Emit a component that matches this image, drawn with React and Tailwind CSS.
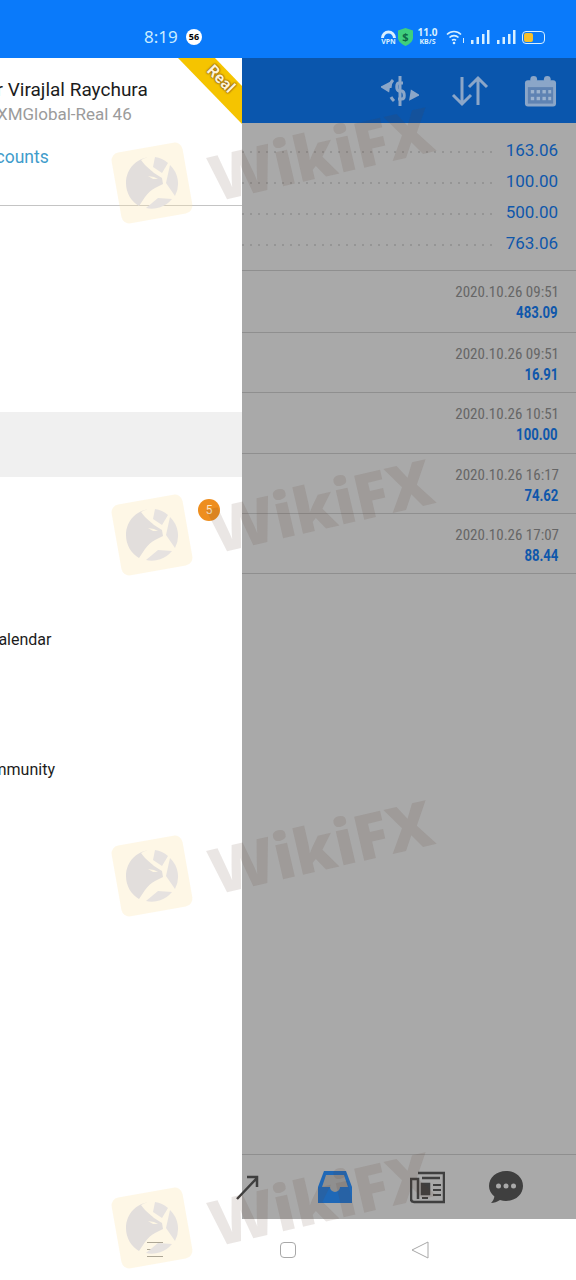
import React from 'react';

const balances = ['163.06', '100.00', '500.00', '763.06'];

const deals = [
  { time: '2020.10.26 09:51', amount: '483.09', h: 'h-[62px]' },
  { time: '2020.10.26 09:51', amount: '16.91', h: 'h-[60px]' },
  { time: '2020.10.26 10:51', amount: '100.00', h: 'h-[61px]' },
  { time: '2020.10.26 16:17', amount: '74.62', h: 'h-[60px]' },
  { time: '2020.10.26 17:07', amount: '88.44', h: 'h-[60px]' },
];

const menu = [
  { id: 1 },
  { id: 2 },
  { id: 3 },
  { id: 4, active: true },
  { id: 5, badge: '5' },
  { id: 6 },
  { id: 7, label: 'Calendar', shift: '-ml-[12px]' },
  { id: 8 },
  { id: 9, label: 'Community', shift: '-ml-[27px]' },
];

const Watermark = ({ className }) => (
  <div className={`absolute left-[112px] w-[330px] h-[120px] pointer-events-none ${className}`}>
    <div className="absolute left-[4px] top-[12px] w-[72px] h-[72px] rounded-[8px] bg-[#fbe6ad]/30 rotate-[-10deg] flex items-center justify-center">
      <svg width="54" height="54" viewBox="0 0 54 54" className="rotate-[10deg]">
        <path d="M27 1C12 1 1 13 1 27c0 10 5 18 13 23l6-9c3-4 6-7 10-9l8-4-1-6-8-5C25 13 20 10 16 4c3-2 7-3 11-3z" fill="#e2dedc" />
        <path d="M23 20l6 1 4 2-5 0z" fill="#fdf6e3" />
        <path d="M30 1a26 26 0 0 1 13 6L37 17 28 11z" fill="#e6e2e0" />
        <path d="M45 9a26 26 0 0 1 5 31L41 27z" fill="#e6e2e0" />
        <path d="M47 43a26 26 0 0 1-26 9l12-10z" fill="#e6e2e0" />
      </svg>
    </div>
    <span className="absolute left-[95px] top-[-22px] rotate-[-13deg] font-['Open_Sans',sans-serif] font-extrabold text-[63px] leading-[80px] text-[#5c3a30]/[0.13] whitespace-nowrap">
      WikiFX
    </span>
  </div>
);

const SignalIcon = () => (
  <svg width="19" height="16" viewBox="0 0 19 16" fill="#d8f0ff">
    <rect x="0" y="11" width="2.5" height="4" />
    <rect x="5.5" y="8" width="2.5" height="7" />
    <rect x="11" y="5" width="2.5" height="10" />
    <rect x="16" y="1" width="2.5" height="14" />
  </svg>
);

const StatusBar = () => (
  <div className="h-[58px] bg-[#0a7afa] flex items-center pt-[16px] shrink-0">
    <span className="ml-[144px] w-[33px] text-[17px] text-[#c9ecff]">8:19</span>
    <span className="ml-[9px] w-[16px] h-[16px] rounded-full bg-white text-black text-[9px] font-bold flex items-center justify-center">
      56
    </span>
    <div className="ml-[178px] flex items-center">
      <div className="w-[17px] flex flex-col items-center text-[#d8f0ff] leading-none">
        <svg width="15" height="8" viewBox="0 0 15 8" fill="#d8f0ff">
          <path d="M0 8a7.5 7.5 0 0 1 15 0h-3a4.5 4.5 0 0 0-9 0z" />
        </svg>
        <span className="text-[7px] font-bold">VPN</span>
      </div>
      <svg className="ml-[1px]" width="15" height="18" viewBox="0 0 15 18">
        <path d="M7.5 0L15 2.5v7c0 4-3.5 6.8-7.5 8.5C3.500 16.300 0 13.500 0 9.500v-7z" fill="#3fcf7d" />
        <text x="7.500" y="13" textAnchor="middle" fontSize="11" fontWeight="700" fill="#0f6a48">$</text>
      </svg>
      <div className="ml-[4px] w-[21px] flex flex-col items-center text-[#d8f0ff] font-bold leading-[9px]">
        <span className="text-[10px]">11.0</span>
        <span className="text-[7px]">KB/S</span>
      </div>
      <svg className="ml-[8px]" width="19" height="15" viewBox="0 0 19 15" fill="none" stroke="#d8f0ff" strokeWidth="1.6">
        <path d="M1 4.500c4-4 10-4 14 0" />
        <path d="M3.500 7.500c2.500-2.500 6.500-2.500 9 0" />
        <path d="M6 10.300c1.200-1 2.800-1 4 0" />
        <circle cx="8" cy="13" r="1.300" fill="#d8f0ff" stroke="none" />
        <path d="M17.500 8v5" strokeWidth="1" />
      </svg>
      <div className="ml-[6px]"><SignalIcon /></div>
      <div className="ml-[7px]"><SignalIcon /></div>
      <div className="ml-[6px] w-[23px] h-[13px] rounded-[4px] border border-[#d8f0ff] p-[1px]">
        <div className="w-[9px] h-full rounded-[2px] bg-[#f6c02c]" />
      </div>
    </div>
  </div>
);

const Drawer = () => (
  <div className="w-[242px] shrink-0 bg-white relative overflow-hidden font-['Roboto',sans-serif]">
    <div className="h-[148px] border-b border-[#c4c4c4] relative">
      <div className="-ml-[20px] pt-[21px] text-[19px] leading-[22px] text-[#1c1c1c] whitespace-nowrap">Mr Virajlal Raychura</div>
      <div className="-ml-[3px] pt-[2px] text-[17px] leading-[22px] text-[#9b9b9b] whitespace-nowrap">XMGlobal-Real 46</div>
      <div className="-ml-[25px] pt-[21px] text-[17.500px] leading-[22px] text-[#3f9ccb] whitespace-nowrap">Accounts</div>
      <svg className="absolute right-0 top-0" width="64" height="66" viewBox="0 0 64 66">
        <polygon points="0,0 37,0 64,28 64,66" fill="#f5c400" />
      </svg>
      <span className="absolute right-[5px] top-[13px] rotate-45 text-[16px] leading-none font-bold text-[#fff3d6] [text-shadow:0_0_2px_#7a4a10,0_0_2px_#7a4a10]">Real</span>
    </div>
    <div className="pt-[11px]">
      {menu.map((item) => (
        <div key={item.id} className={`h-[65px] relative flex items-center text-[16px] text-[#1c1c1c] ${item.active ? 'bg-[#f0f0f0]' : ''}`}>
          {item.label && <span className={`${item.shift} mt-[1px]`}>{item.label}</span>}
          {item.badge && (
            <span className="absolute left-[198px] top-[22px] w-[22px] h-[22px] rounded-full bg-[#ee8e1e] text-[#ffe7c4] text-[12px] flex items-center justify-center">
              {item.badge}
            </span>
          )}
        </div>
      ))}
    </div>
  </div>
);

const MainPanel = () => (
  <div className="flex-1 bg-[#a9a9a9] flex flex-col font-['Roboto',sans-serif]">
    <div className="h-[65px] bg-[#0a56ad] flex items-center shrink-0 relative">
      <svg className="ml-[139px]" width="38" height="34" viewBox="0 0 38 34" fill="none" stroke="#8ba6c8" strokeWidth="3">
        <path d="M19 2v30" />
        <path d="M22 9h-4c-3 0-3 7 0 8h3c3 1 3 8 0 8h-4" />
        <path d="M12 6c-2 2-3 5-3 8M10 23c1 2 2 3 3 4" />
        <path d="M2 13l6-3-1 6z" fill="#8ba6c8" />
        <path d="M36 21l-6 3 1-6z" fill="#8ba6c8" />
      </svg>
      <svg className="ml-[32px]" width="38" height="32" viewBox="0 0 38 32" fill="none" stroke="#8ba6c8" strokeWidth="3">
        <path d="M11 2v27M2 20l9 9 9-9" />
        <path d="M27 30V3M18 12l9-9 9 9" />
      </svg>
      <svg className="ml-[35px]" width="33" height="34" viewBox="0 0 34 34">
        <rect x="1" y="6" width="32" height="27" rx="3" fill="#8ba6c8" />
        <rect x="4" y="13" width="26" height="17" fill="#5f83b3" />
        <circle cx="10" cy="5" r="3.500" fill="#8ba6c8" />
        <circle cx="24" cy="5" r="3.500" fill="#8ba6c8" />
        <g fill="#9cb3cf">
          <rect x="7" y="16" width="3.500" height="3.500" />
          <rect x="13" y="16" width="3.500" height="3.500" />
          <rect x="19" y="16" width="3.500" height="3.500" />
          <rect x="25" y="16" width="3" height="3.500" />
          <rect x="7" y="23" width="3.500" height="3.500" />
          <rect x="13" y="23" width="3.500" height="3.500" />
          <rect x="19" y="23" width="3.500" height="3.500" />
          <rect x="25" y="23" width="3" height="3.500" />
        </g>
      </svg>
    </div>
    <div className="h-[148px] border-b border-[#8f8f8f] pt-[12px] pr-[18px] shrink-0">
      {balances.map((value) => (
        <div key={value} className="h-[31px] flex items-center justify-between">
          <div className="w-[250px] h-[2px] mt-[3px] bg-[linear-gradient(90deg,#959595_2px,transparent_2px)] bg-[length:8px_2px]" />
          <span className="text-[17px] text-[#0f57ab]">{value}</span>
        </div>
      ))}
    </div>
    {deals.map((deal) => (
      <div key={deal.time + deal.amount} className={`${deal.h} border-b border-[#8f8f8f] pr-[17px] pt-[12px] flex flex-col items-end shrink-0`}>
        <span className="text-[15px] leading-[18px] text-[#666666] [font-stretch:87%] whitespace-nowrap">{deal.time}</span>
        <span className="mt-[1px] mr-[1px] text-[16px] leading-[21px] font-bold text-[#0f57ab] scale-x-[0.82] origin-right">{deal.amount}</span>
      </div>
    ))}
    <div className="flex-1" />
    <div className="h-[65px] border-t border-[#8f8f8f] flex items-center shrink-0 relative">
      <svg className="-ml-[6px]" width="24" height="26" viewBox="0 0 24 26" fill="none" stroke="#3f3f3f" strokeWidth="2.500">
        <path d="M1 25L21 4M11 3h10v10" />
      </svg>
      <svg className="ml-[58px]" width="34" height="32" viewBox="0 0 34 32">
        <path d="M6 0h22l6 16v16H0V16z" fill="#1f68b7" />
        <path d="M8 4h18l4 12h-8a5 5 0 0 1-10 0H4z" fill="#8f8f8f" />
      </svg>
      <svg className="ml-[58px]" width="35" height="34" viewBox="0 0 35 34" fill="none" stroke="#3f3f3f" strokeWidth="2.500">
        <path d="M8 3h26v29H4c-2 0-3-1-3-3V9h7v20" />
        <path d="M12 8h18" />
        <rect x="12" y="14" width="7" height="10" fill="#3f3f3f" />
        <path d="M23 15h8M23 20h8M23 25h8M12 28h6" strokeWidth="2" />
      </svg>
      <svg className="ml-[44px]" width="34" height="34" viewBox="0 0 34 34">
        <path d="M17 1c9.400 0 17 6.500 17 15s-7.600 15-17 15c-2 0-4-.3-6-.9C8 32 5 33 2 33c2-2 3-4 3.400-6.500C2 23.500 0 20 0 16 0 7.500 7.600 1 17 1z" fill="#3f3f3f" />
        <circle cx="9.500" cy="16" r="2.500" fill="#a9a9a9" />
        <circle cx="17" cy="16" r="2.500" fill="#a9a9a9" />
        <circle cx="24.500" cy="16" r="2.500" fill="#a9a9a9" />
      </svg>
    </div>
  </div>
);

const NavBar = () => (
  <div className="h-[61px] bg-white flex items-center shrink-0">
    <div className="ml-[147px] w-[16px] flex flex-col gap-[6px]">
      <div className="h-px bg-[#8c8c8c]" />
      <div className="h-px bg-[#8c8c8c]" />
      <div className="h-px bg-[#8c8c8c]" />
    </div>
    <div className="ml-[117px] w-[16px] h-[16px] rounded-[4px] border border-[#a8a8a8]" />
    <svg className="ml-[115px]" width="18" height="18" viewBox="0 0 18 18" fill="none" stroke="#a8a8a8">
      <path d="M17 1v16L1 9z" />
    </svg>
  </div>
);

export default function App() {
  return (
    <div className="relative w-[576px] h-[1280px] overflow-hidden flex flex-col bg-white">
      <StatusBar />
      <div className="flex-1 flex min-h-0">
        <Drawer />
        <MainPanel />
      </div>
      <NavBar />
      <Watermark className="top-[135px]" />
      <Watermark className="top-[487px]" />
      <Watermark className="top-[828px]" />
      <Watermark className="top-[1180px]" />
    </div>
  );
}
